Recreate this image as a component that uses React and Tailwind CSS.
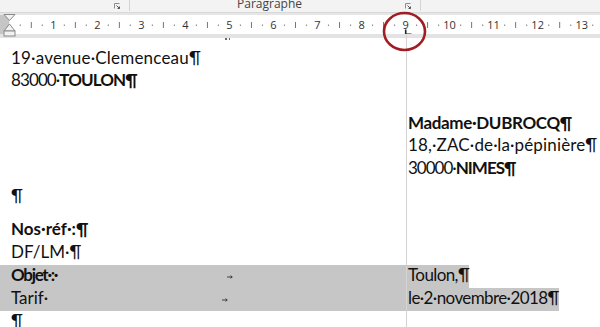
import React from 'react';

// ruler geometry (px): position of 0 cm and width of one cm
const ORIGIN = 9.3;
const CM = 44.03;

const Launcher = () => (
  <svg width="7" height="7" viewBox="0 0 7 7" className="block">
    <path d="M0.5 5.5V0.5H5.5" fill="none" stroke="#8c8c8c" strokeWidth="1" />
    <path d="M2.5 2.5L5.5 5.5M3.5 5.5H5.5V3.5" fill="none" stroke="#555" strokeWidth="1" />
  </svg>
);

const Ruler = () => {
  const marks = [];
  for (let n = 0; n <= 13; n++) {
    const x = ORIGIN + n * CM;
    if (n > 0) {
      marks.push(
        <text key={`n${n}`} x={x} y="13.6" textAnchor="middle" fontSize="11" fill="#333" fontFamily="'Open Sans', sans-serif">
          {n}
        </text>
      );
    }
    marks.push(<rect key={`a${n}`} x={x + CM * 0.25 - 0.6} y="9.6" width="1.2" height="1.2" fill="#777" />);
    marks.push(<rect key={`b${n}`} x={x + CM * 0.5 - 0.5} y="7" width="1" height="6" fill="#777" />);
    marks.push(<rect key={`c${n}`} x={x + CM * 0.75 - 0.6} y="9.6" width="1.2" height="1.2" fill="#777" />);
  }
  return (
    <svg width="600" height="19" className="block">
      <rect x="0" y="0" width="600" height="19" fill="#fff" />
      <rect x="0" y="0" width={ORIGIN} height="19" fill="#c6c6c6" />
      {marks}
      {/* tab stop at 9 cm */}
      <path d="M405.7 14.5V19.2H411.5" fill="none" stroke="#222" strokeWidth="1.6" />
    </svg>
  );
};

const TabArrow = () => (
  <svg width="6" height="4" viewBox="0 0 6 4" className="block">
    <path d="M0 2H5M3.5 0.7L5.3 2L3.5 3.3" fill="none" stroke="#333" strokeWidth="0.9" />
  </svg>
);

const Line = ({ children, className = '' }) => (
  <div className={`h-[22.6px] leading-[19.4px] whitespace-pre ${className}`}>{children}</div>
);

const TabRow = ({ left, right, rightClass = '' }) => (
  <div className="flex">
    <div className="-ml-[11px] flex h-[22.6px] w-fit bg-[#c6c6c6] pl-[11px] leading-[19.4px] whitespace-pre">
      <div className="flex w-[397px]">
        <span>{left}</span>
        <div className="flex flex-1 items-start justify-center pt-[10px] pr-[6px]">
          <TabArrow />
        </div>
      </div>
      <span className={rightClass}>{right}</span>
    </div>
  </div>
);

export default function App() {
  return (
    <div className="relative h-[327px] w-[600px] overflow-hidden bg-white">
      {/* ribbon bottom */}
      <div className="flex h-[12px] items-start overflow-hidden bg-[#f3f3f3] font-['Open_Sans',sans-serif] text-[12px] leading-[7.3px] text-[#444]">
        <div className="flex w-[129px] justify-end pt-[3px] pr-[8px]">
          <Launcher />
        </div>
        <div className="h-[11px] w-px bg-[#d4d4d4]" />
        <div className="flex w-[290px] items-start">
          <span className="flex-1 pl-[4px] text-center">Paragraphe</span>
          <div className="mt-[3px] mr-[8px]">
            <Launcher />
          </div>
        </div>
        <div className="h-[11px] w-px bg-[#d4d4d4]" />
      </div>
      <div className="h-[3px] border-t border-[#d8d8d8] bg-[#e6e6e6]" />
      <Ruler />
      <div className="h-[4px] bg-[#e3e3e3]" />

      {/* page */}
      <div className="pt-[9.7px] pl-[11px] font-['Lato',sans-serif] text-[17px] text-[#111]">
        <Line className="tracking-[0.2px]">19·avenue·Clemenceau¶</Line>
        <Line className="tracking-[-0.9px]">
          83000·<b>TOULON¶</b>
        </Line>
        <Line className="mt-[20px] pl-[397px] font-bold tracking-[-0.35px]">Madame·DUBROCQ¶</Line>
        <Line className="pl-[397px] tracking-[0.15px]">18,·ZAC·de·la·pépinière¶</Line>
        <Line className="pl-[397px] tracking-[-1px]">
          30000·<b>NIMES¶</b>
        </Line>
        <Line className="mt-[5px]">¶</Line>
        <Line className="mt-[11px] font-bold">Nos·réf·:¶</Line>
        <Line>DF/LM·¶</Line>
        <div className="mt-[1px]">
          <TabRow left={<b className="tracking-[-1.3px]">Objet·:·</b>} right="Toulon,¶" rightClass="tracking-[-0.6px]" />
          <TabRow left="Tarif·" right="le·2·novembre·2018¶" rightClass="tracking-[-0.6px]" />
        </div>
        <Line>¶</Line>
      </div>

      {/* overlays: tab guide, indent markers, red circle */}
      <div className="absolute top-[35px] bottom-0 left-[406px] w-px bg-[#d3d3d3]" />
      <div className="absolute top-[38px] left-[225px] flex gap-[2px]">
        <div className="h-[1.5px] w-[1.5px] bg-[#666]" />
        <div className="h-[1.5px] w-[1.5px] bg-[#666]" />
      </div>
      <svg className="absolute top-[13px] left-0" width="20" height="25" viewBox="0 0 20 25">
        <path d="M4 1.5H15L9.5 7.5Z" fill="#f2f2f2" stroke="#8a8a8a" strokeWidth="1" />
        <path d="M9.5 11L15 18H4Z" fill="#f2f2f2" stroke="#8a8a8a" strokeWidth="1" />
        <rect x="4" y="18" width="11" height="5" fill="#f2f2f2" stroke="#8a8a8a" strokeWidth="1" />
      </svg>
      <svg className="absolute top-0 left-0" width="600" height="60">
        <ellipse cx="404.5" cy="31.5" rx="20.5" ry="18.5" fill="none" stroke="#a11d22" strokeWidth="2.6" />
      </svg>
    </div>
  );
}
